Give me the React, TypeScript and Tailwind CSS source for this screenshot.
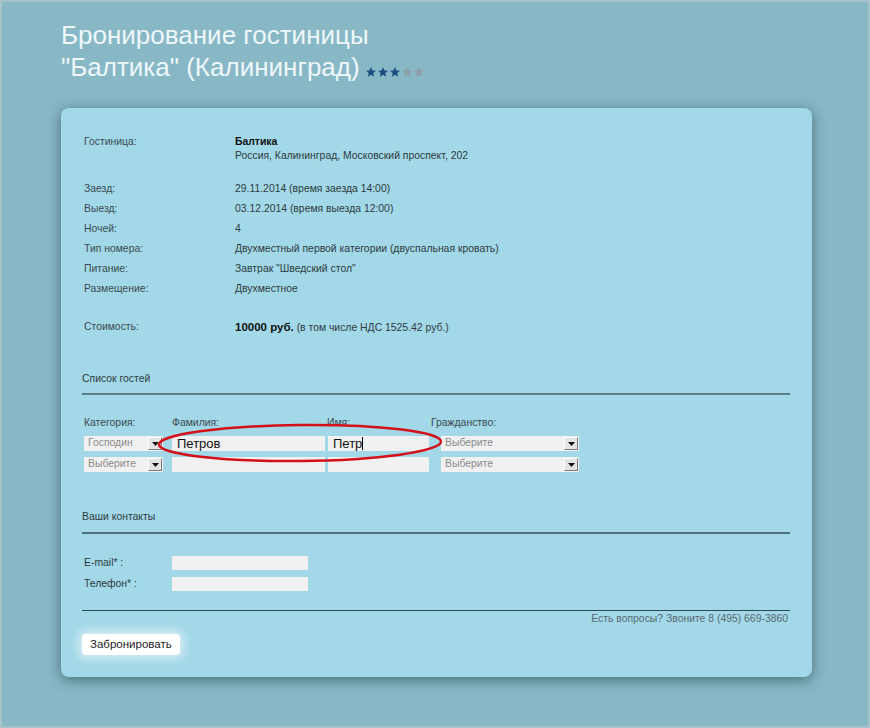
import React from 'react'

const info = [
  { label: 'Заезд:', value: '29.11.2014 (время заезда 14:00)' },
  { label: 'Выезд:', value: '03.12.2014 (время выезда 12:00)' },
  { label: 'Ночей:', value: '4' },
  { label: 'Тип номера:', value: 'Двухместный первой категории (двуспальная кровать)' },
  { label: 'Питание:', value: 'Завтрак "Шведский стол"' },
  { label: 'Размещение:', value: 'Двухместное' },
]

function Star({ color }: { color: string }) {
  return (
    <svg width="12" height="12" viewBox="0 0 24 24">
      <path d="M12 2l2.9 6.9 7.1.6-5.4 4.7 1.7 7.3L12 17.6 5.7 21.5l1.7-7.3L2 9.5l7.1-.6z" fill={color} />
    </svg>
  )
}

function Select({ text, width }: { text: string; width: string }) {
  return (
    <div className={`${width} h-[15px] bg-[#f1f1f1] flex items-center justify-between pl-[4px] pr-[1px]`}>
      <span className="text-[#8a8a8a] leading-none">{text}</span>
      <span className="w-[14px] h-[13px] bg-[#e4e4e4] border-r border-b border-[#7a7a7a] border-t border-l border-t-white border-l-white flex items-center justify-center">
        <svg width="7" height="4" viewBox="0 0 7 4"><path d="M0 0h7L3.5 4z" fill="#111" /></svg>
      </span>
    </div>
  )
}

export default function App() {
  return (
    <div
      className="h-[728px] bg-[#88b8c6] border-2 border-[#a8c2ca] overflow-hidden text-[10.4px] text-[#2e3a3e]"
      style={{ fontFamily: '"Liberation Sans", Arial, sans-serif' }}
    >
      {/* Title */}
      <div className="pl-[59px] pt-[17px] text-[#eef7fa] text-[26px] leading-[32px]">
        <div>Бронирование гостиницы</div>
        <div className="flex items-end">
          <span>"Балтика" (Калининград)</span>
          <span className="flex ml-[5px] mb-[5px]">
            <Star color="#1b4e7e" />
            <Star color="#1b4e7e" />
            <Star color="#1b4e7e" />
            <Star color="#8d9ea6" />
            <Star color="#8d9ea6" />
          </span>
        </div>
      </div>

      {/* Card */}
      <div className="ml-[59px] mt-[25px] w-[751px] h-[569px] bg-[#a2d8e8] rounded-[8px] shadow-[0_3px_14px_rgba(20,50,60,0.55)] pl-[21px] pr-[22px] pt-[27px] relative">
        <div className="pl-[2px] flex leading-[14px]">
          <div className="w-[151px] text-[#3b4a50]">Гостиница:</div>
          <div>
            <div className="font-bold text-[#111]">Балтика</div>
            <div>Россия, Калининград, Московский проспект, 202</div>
          </div>
        </div>

        <div className="mt-[16px] pl-[2px]">
          {info.map(r => (
            <div key={r.label} className="flex h-[20px] leading-[20px]">
              <div className="w-[151px] text-[#3b4a50]">{r.label}</div>
              <div>{r.value}</div>
            </div>
          ))}
        </div>

        <div className="mt-[18px] pl-[2px] flex h-[20px] leading-[20px]">
          <div className="w-[151px] text-[#3b4a50]">Стоимость:</div>
          <div>
            <span className="font-bold text-[#111] text-[11.5px]">10000 руб.</span> (в том числе НДС 1525.42 руб.)
          </div>
        </div>

        {/* Guests */}
        <div className="mt-[35px] leading-[14px]">Список гостей</div>
        <div className="mt-[7px] h-[2px] bg-[#5e7f89]" />

        <div className="mt-[21px] pl-[2px] flex leading-[14px] text-[#3b4a50]">
          <div className="w-[88px]">Категория:</div>
          <div className="w-[155px]">Фамилия:</div>
          <div className="w-[104px]">Имя:</div>
          <div>Гражданство:</div>
        </div>
        <div className="mt-[6px] pl-[2px] flex flex-col gap-[6px]">
          <div className="flex">
            <Select text="Господин" width="w-[79px]" />
            <div className="ml-[9px] w-[153px] h-[15px] bg-[#f1f1f1] text-[13px] leading-[15px] pl-[5px] text-[#111]">Петров</div>
            <div className="ml-[3px] w-[101px] h-[15px] bg-[#f1f1f1] text-[13px] leading-[15px] pl-[5px] text-[#111] flex items-center">
              Петр<span className="inline-block w-[1px] h-[13px] bg-black" />
            </div>
            <div className="ml-[12px]"><Select text="Выберите" width="w-[138px]" /></div>
          </div>
          <div className="flex">
            <Select text="Выберите" width="w-[79px]" />
            <div className="ml-[9px] w-[153px] h-[15px] bg-[#f1f1f1]" />
            <div className="ml-[3px] w-[101px] h-[15px] bg-[#f1f1f1]" />
            <div className="ml-[12px]"><Select text="Выберите" width="w-[138px]" /></div>
          </div>
        </div>

        {/* Contacts */}
        <div className="mt-[38px] leading-[14px]">Ваши контакты</div>
        <div className="mt-[8px] h-[2px] bg-[#4f6f79]" />

        <div className="mt-[22px] pl-[2px] flex flex-col gap-[7px] leading-[14px]">
          <div className="flex items-center">
            <div className="w-[88px]">E-mail* :</div>
            <div className="w-[136px] h-[14px] bg-[#f1f1f1]" />
          </div>
          <div className="flex items-center">
            <div className="w-[88px]">Телефон* :</div>
            <div className="w-[136px] h-[14px] bg-[#f1f1f1]" />
          </div>
        </div>

        <div className="mt-[19px] h-[1px] bg-[#2d4952]" />
        <div className="text-right pr-[2px] text-[#5b6a70] leading-[16px] mt-[0px]">
          Есть вопросы? Звоните 8 (495) 669-3860
        </div>

        <button className="mt-[7px] h-[21px] px-[8px] bg-white rounded-[4px] text-[11.5px] text-[#222] shadow-[0_0_10px_4px_rgba(255,255,255,0.55)]">
          Забронировать
        </button>

        {/* red highlight */}
        <svg className="absolute left-[94px] top-[315px] pointer-events-none" width="290" height="42" viewBox="0 0 290 42">
          <ellipse cx="145" cy="20" rx="141" ry="18" fill="none" stroke="#d4101a" strokeWidth="2.5" transform="rotate(-0.6 145 20)" />
        </svg>
      </div>
    </div>
  )
}
